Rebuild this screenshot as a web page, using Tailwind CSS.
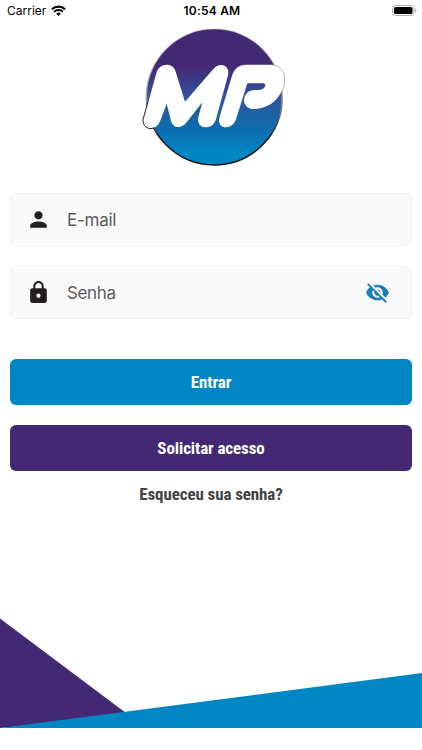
<!DOCTYPE html>
<html lang="pt-BR">
<head>
  <meta charset="UTF-8">
  <meta name="viewport" content="width=device-width, initial-scale=1.0">
  <title>Login</title>
  <script src="https://cdn.jsdelivr.net/npm/@tailwindcss/browser@4"></script>
</head>
<body class="bg-white font-['Inter',sans-serif]">
  <div class="w-[422px] h-[750px] flex flex-col overflow-hidden">

    <!-- Barra de status -->
    <header class="h-[22px] shrink-0 grid grid-cols-3 items-center pl-[7px] pr-[5px] text-black">
      <div class="flex items-center gap-[5px] text-[12px]">
        <span>Carrier</span>
        <svg class="w-[15px] h-[11px] -mt-0.5" viewBox="0 0 15 11">
          <path d="M.9 4.300a9.400 9.400 0 0 1 13.200 0M3.200 6.700a6.100 6.100 0 0 1 8.600 0" fill="none" stroke="#000" stroke-width="2.100"/>
          <path d="M5.200 8.700a3.300 3.300 0 0 1 4.600 0L7.500 11z"/>
        </svg>
      </div>
      <span class="text-[12px] font-semibold text-center tracking-[0.2px] whitespace-nowrap">10:54 AM</span>
      <svg class="w-[25px] h-[11px] justify-self-end -mt-0.5" viewBox="0 0 25 11">
        <rect x=".5" y=".5" width="21.500" height="10" rx="3" fill="#fff" stroke="#aaa"/>
        <rect x="2" y="2" width="18.500" height="7" rx="1.600"/>
        <path d="M23.300 3.600c1.500.6 1.500 3.200 0 3.800z" fill="#999"/>
      </svg>
    </header>

    <!-- Logo -->
    <svg class="w-[156px] h-[154px] shrink-0 -mt-0.5 ml-[136px]" viewBox="0 0 468 462">
      <defs>
        <linearGradient id="fundo" x1="0" y1="0" x2="0" y2="1">
          <stop offset="0" stop-color="#432874"/>
          <stop offset=".27" stop-color="#432874"/>
          <stop offset=".5" stop-color="#32539d"/>
          <stop offset=".72" stop-color="#0e6bad"/>
          <stop offset=".92" stop-color="#0086c3"/>
          <stop offset="1" stop-color="#0086c3"/>
        </linearGradient>
        <linearGradient id="borda" x1="0" y1="0" x2="0" y2="1">
          <stop offset=".15" stop-color="#bbb" stop-opacity=".3"/>
          <stop offset=".5" stop-color="#aaa"/>
          <stop offset=".8" stop-color="#111"/>
        </linearGradient>
      </defs>
      <circle cx="235" cy="231" r="204" fill="url(#fundo)" stroke="url(#borda)" stroke-width="4.500"/>
      <path d="M61 160C66 142 78 134 92 134C106 134 114 141 118 152L147 245L232 147C240 138 248 134 258 135C274 138 280 151 276 166L241 294C236 314 223 322 208 322C193 322 183 309 187 292L199 247L152 307C144 317 135 321 127 321C116 321 108 314 105 302L92 251L74 299C67 317 57 325 45 325C28 325 19 311 23 296Z" fill="#fff"/>
      <path d="M287 170C294 146 308 134 330 134L403 134C430 134 446 153 446 180C440 232 405 266 350 267C333 266 324 254 324 240C326 222 338 210 355 210L368 210C379 210 387 204 388 196Q388 190 382 190L334 190L301 295C295 314 283 322 269 322C254 322 246 308 250 293Z" fill="#fff"/>
      <path d="M36 245L22 295C18 312 29 326 45 326L56 323" fill="none" stroke="#222" stroke-width="3"/>
      <path d="M410 135C432 136 446 153 446 180Q446 200 438 215" fill="none" stroke="#aaa" stroke-width="2.500"/>
    </svg>

    <!-- Formulário -->
    <form class="px-2.5 pt-[19px] flex flex-col">
      <label class="h-[53px] flex items-center rounded-md border border-[#f1f1f1] bg-[#fafafa] pl-[15px] pr-[21px]">
        <svg class="w-[25px] h-[25px] shrink-0" viewBox="0 0 24 24" fill="#231f20">
          <path d="M12 12c2.210 0 4-1.790 4-4s-1.790-4-4-4-4 1.790-4 4 1.790 4 4 4zm0 2c-2.670 0-8 1.340-8 4v2h16v-2c0-2.660-5.330-4-8-4z"/>
        </svg>
        <input type="email" placeholder="E-mail" class="ml-4 pt-[3px] min-w-0 flex-1 text-[17px] tracking-[-0.25px] placeholder:text-[#5c5c5c] outline-none">
      </label>

      <label class="mt-5 h-[53px] flex items-center rounded-md border border-[#f1f1f1] bg-[#fafafa] pl-[15px] pr-[21px]">
        <svg class="w-[25px] h-[25px] shrink-0" viewBox="0 0 24 24" fill="#231f20">
          <path d="M18 8h-1V6c0-2.760-2.240-5-5-5S7 3.240 7 6v2H6c-1.100 0-2 .9-2 2v10c0 1.100.9 2 2 2h12c1.100 0 2-.9 2-2V10c0-1.100-.9-2-2-2zm-6 9c-1.100 0-2-.9-2-2s.9-2 2-2 2 .9 2 2-.9 2-2 2zm3.100-9H8.900V6c0-1.710 1.390-3.100 3.100-3.100s3.100 1.390 3.100 3.100v2z"/>
        </svg>
        <input type="password" placeholder="Senha" class="ml-4 pt-[3px] min-w-0 flex-1 text-[17px] tracking-[-0.35px] placeholder:text-[#5c5c5c] outline-none">
        <svg class="w-[25px] h-[25px] shrink-0" viewBox="0 0 24 24" fill="#1c7fb5">
          <path d="M12 7c2.760 0 5 2.240 5 5 0 .65-.13 1.260-.36 1.830l2.920 2.920c1.510-1.260 2.700-2.890 3.430-4.750-1.730-4.390-6-7.500-11-7.500-1.400 0-2.740.25-3.980.7l2.160 2.160C10.740 7.130 11.350 7 12 7zM2 4.270l2.280 2.280.46.46C3.080 8.300 1.780 10.020 1 12c1.730 4.390 6 7.500 11 7.500 1.550 0 3.030-.3 4.380-.84l.42.42L19.730 22 21 20.730 3.270 3 2 4.270zM7.530 9.800l1.550 1.550c-.05.21-.08.43-.08.65 0 1.660 1.340 3 3 3 .22 0 .44-.03.65-.08l1.550 1.550c-.67.33-1.410.53-2.200.53-2.760 0-5-2.240-5-5 0-.79.2-1.530.53-2.200zm4.310-.78l3.150 3.150.02-.16c0-1.660-1.340-3-3-3l-.17.01z"/>
        </svg>
      </label>

      <button type="button" class="mt-10 h-[46px] pt-0.5 rounded-md bg-[#0086c3] text-white font-bold font-['Roboto_Condensed',Roboto,sans-serif] font-stretch-75% text-[17px] tracking-[-0.1px]">Entrar</button>
      <button type="button" class="mt-5 h-[46px] pt-0.5 rounded-md bg-[#432874] text-white font-bold font-['Roboto_Condensed',Roboto,sans-serif] font-stretch-75% text-[17px] tracking-[-0.1px]">Solicitar acesso</button>
      <a href="#" class="mt-2.5 text-center leading-[26px] text-[#444] font-bold font-['Roboto_Condensed',Roboto,sans-serif] font-stretch-75% text-[17px] tracking-[-0.1px]">Esqueceu sua senha?</a>
    </form>

    <!-- Rodapé decorativo -->
    <svg class="mt-auto mb-[22px] w-[422px] h-[110px] shrink-0" viewBox="0 0 422 110">
      <path d="M0 .5L130 98L0 110z" fill="#432874"/>
      <path d="M0 110L422 55V110z" fill="#0086c3"/>
    </svg>
  </div>
</body>
</html>
